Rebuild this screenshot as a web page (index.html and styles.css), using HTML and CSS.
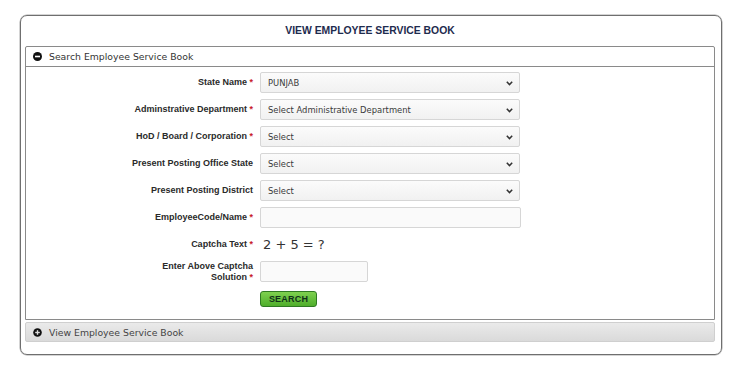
FILE: index.html
```html
<!DOCTYPE html>
<html>
<head>
<meta charset="utf-8">
<title>View Employee Service Book</title>
<link rel="stylesheet" href="styles.css">
</head>
<body>
<div class="outer">
  <div class="title">VIEW EMPLOYEE SERVICE BOOK</div>

  <div class="panel">
    <div class="panel-head">
      <svg class="ico" width="9" height="9" viewBox="0 0 9 9"><circle cx="4.5" cy="4.5" r="4.5" fill="#111"/><rect x="2" y="3.7" width="5" height="1.6" fill="#fff"/></svg>
      <span>Search Employee Service Book</span>
    </div>
    <div class="panel-body">
      <label class="lbl">State Name <i>*</i></label>
      <div class="sel"><span>PUNJAB</span><svg class="chev" width="7" height="5" viewBox="0 0 7 5"><path d="M0.8 0.8 L3.5 3.6 L6.2 0.8" fill="none" stroke="#333" stroke-width="1.5"/></svg></div>

      <label class="lbl">Adminstrative Department <i>*</i></label>
      <div class="sel"><span>Select Administrative Department</span><svg class="chev" width="7" height="5" viewBox="0 0 7 5"><path d="M0.8 0.8 L3.5 3.6 L6.2 0.8" fill="none" stroke="#333" stroke-width="1.5"/></svg></div>

      <label class="lbl">HoD / Board / Corporation <i>*</i></label>
      <div class="sel"><span>Select</span><svg class="chev" width="7" height="5" viewBox="0 0 7 5"><path d="M0.8 0.8 L3.5 3.6 L6.2 0.8" fill="none" stroke="#333" stroke-width="1.5"/></svg></div>

      <label class="lbl">Present Posting Office State</label>
      <div class="sel"><span>Select</span><svg class="chev" width="7" height="5" viewBox="0 0 7 5"><path d="M0.8 0.8 L3.5 3.6 L6.2 0.8" fill="none" stroke="#333" stroke-width="1.5"/></svg></div>

      <label class="lbl">Present Posting District</label>
      <div class="sel"><span>Select</span><svg class="chev" width="7" height="5" viewBox="0 0 7 5"><path d="M0.8 0.8 L3.5 3.6 L6.2 0.8" fill="none" stroke="#333" stroke-width="1.5"/></svg></div>

      <label class="lbl">EmployeeCode/Name <i>*</i></label>
      <div class="inp"></div>

      <label class="lbl">Captcha Text <i>*</i></label>
      <div class="captcha">2 + 5 = ?</div>

      <label class="lbl">Enter Above Captcha<br>Solution <i>*</i></label>
      <div class="inp small"></div>

      <div></div>
      <div class="btn-cell"><span class="btn">SEARCH</span></div>
    </div>
  </div>

  <div class="panel2">
    <svg class="ico" width="9" height="9" viewBox="0 0 9 9"><circle cx="4.5" cy="4.5" r="4.3" fill="#111"/><rect x="2.2" y="3.8" width="4.6" height="1.4" fill="#ddd"/><rect x="3.8" y="2.2" width="1.4" height="4.6" fill="#ddd"/></svg>
    <span>View Employee Service Book</span>
  </div>
</div>
</body>
</html>
```

FILE: styles.css
```css
html, body {
  margin: 0;
  padding: 0;
  background: #fff;
}

body {
  width: 737px;
  height: 367px;
  overflow: hidden;
  font-family: "DejaVu Sans", Verdana, sans-serif;
}

.outer {
  margin: 15px 15px 0 20px;
  border: 1px solid #6f6f6f;
  border-radius: 7px;
  padding: 0 6px 12px 4px;
  box-shadow: 0 0 0 0.5px #aaa;
}

.title {
  height: 30px;
  line-height: 29px;
  text-align: center;
  font-family: "Liberation Sans", Arial, sans-serif;
  font-weight: bold;
  font-size: 10.4px;
  color: #1e2b4e;
}

.panel {
  border: 1px solid #8a8a8a;
  border-radius: 2px 2px 0 0;
}

.panel-head {
  height: 19px;
  border-bottom: 1px solid #8a8a8a;
  display: flex;
  align-items: center;
  padding-left: 7px;
  font-size: 9.3px;
  color: #333;
}

.ico {
  display: block;
  margin-right: 7px;
}

.panel-body {
  display: grid;
  grid-template-columns: 227px 261px;
  grid-auto-rows: 21px;
  column-gap: 7px;
  row-gap: 6px;
  align-items: center;
  padding: 5px 0 10px 0;
}

.lbl {
  text-align: right;
  font-family: "Liberation Sans", Arial, sans-serif;
  font-weight: bold;
  font-size: 9px;
  line-height: 11px;
  color: #2a2a2a;
}

.lbl i {
  font-style: normal;
  color: #c8202a;
}

.sel {
  position: relative;
  height: 21px;
  box-sizing: border-box;
  width: 260px;
  border: 1px solid #d6d6d6;
  border-radius: 2px;
  background: linear-gradient(#fbfbfb, #f1f1f1);
  display: flex;
  align-items: center;
  padding-left: 7px;
  font-size: 8.4px;
  color: #3a3a3a;
}

.chev {
  position: absolute;
  right: 6px;
  top: 8px;
}

.inp {
  height: 21px;
  box-sizing: border-box;
  width: 261px;
  border: 1px solid #d6d6d6;
  border-radius: 2px;
  background: #fafafa;
}

.inp.small {
  width: 108px;
}

.captcha {
  font-size: 13px;
  color: #333;
  padding-left: 3px;
  line-height: 21px;
}

.btn-cell {
  display: flex;
  align-items: center;
}

.btn {
  display: flex;
  align-items: center;
  justify-content: center;
  width: 57px;
  height: 16px;
  box-sizing: border-box;
  border: 1px solid #2f7a22;
  border-radius: 3px;
  background: linear-gradient(#7ed14f, #4fae2b);
  font-family: "Liberation Sans", Arial, sans-serif;
  font-weight: bold;
  font-size: 9px;
  color: #10301a;
  letter-spacing: 0.2px;
  margin-top: 1px;
}

.panel2 {
  margin-top: 2px;
  height: 20px;
  box-sizing: border-box;
  border: 1px solid #cfcfcf;
  border-radius: 2px;
  background: linear-gradient(#eaeaea, #dadada);
  display: flex;
  align-items: center;
  padding-left: 7px;
  font-size: 9.3px;
  color: #444;
}
```
